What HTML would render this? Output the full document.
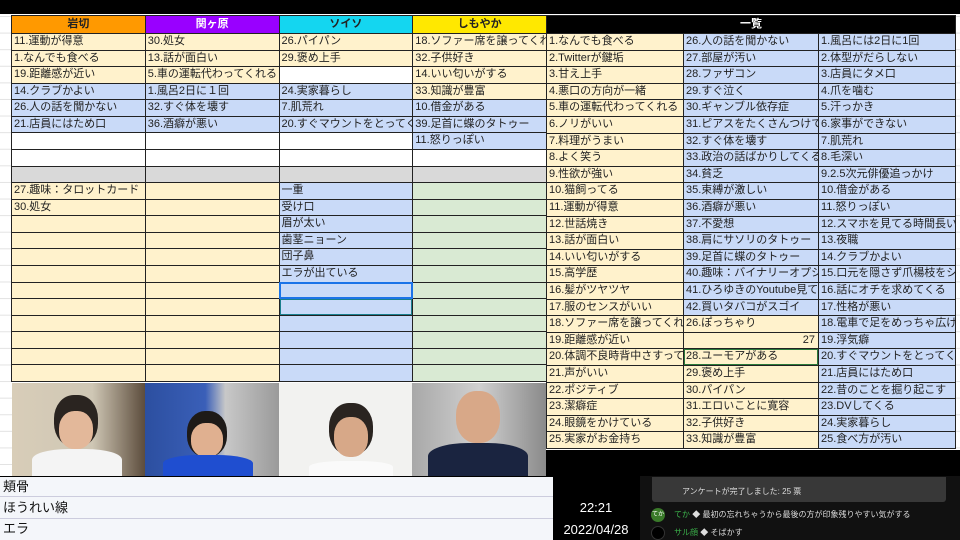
<!DOCTYPE html>
<html><head><meta charset="utf-8">
<style>
*{margin:0;padding:0;box-sizing:border-box}
body{width:960px;height:540px;overflow:hidden;background:#000;position:relative;font-family:"Liberation Sans","Noto Sans CJK JP",sans-serif;}
.sheet{position:absolute;left:0;top:14px;width:960px;height:462px;background:#fff;
background-image:linear-gradient(#e2e2e2 1px,transparent 1px);background-size:100% 16.6px;background-position:0 2px}
.g{position:absolute;display:grid;border:1px solid #222;background:#222;gap:1px}
.g div{font-size:11px;line-height:15.6px;color:#222;padding-left:2px;white-space:nowrap;overflow:hidden;background:#fff}
.h{font-weight:bold;text-align:center;padding:0!important;line-height:17px!important}
.c{background:#fff2cc!important}.b{background:#c9daf8!important}.gr{background:#d9ead3!important}.x{background:#d9d9d9!important}
.vid{position:absolute;top:383px;height:93px;width:134px}
</style></head><body>
<div class="sheet"></div>
<div class="g" style="left:11px;top:15px;width:536px;height:367px;grid-template-columns:repeat(4,1fr);grid-template-rows:17px repeat(21,1fr)">
<div class="h" style="background:#ff9900">岩切</div><div class="h" style="background:#9900ff;color:#fff">関ヶ原</div><div class="h" style="background:#14d6f0">ソイソ</div><div class="h" style="background:#ffe800">しもやか</div>
<div class="c">11.運動が得意</div><div class="c">30.処女</div><div class="c">26.パイパン</div><div class="c">18.ソファー席を譲ってくれる</div>
<div class="c">1.なんでも食べる</div><div class="c">13.話が面白い</div><div class="c">29.褒め上手</div><div class="c">32.子供好き</div>
<div class="c">19.距離感が近い</div><div class="c">5.車の運転代わってくれる</div><div></div><div class="c">14.いい匂いがする</div>
<div class="b">14.クラブかよい</div><div class="b">1.風呂2日に１回</div><div class="b">24.実家暮らし</div><div class="c">33.知識が豊富</div>
<div class="b">26.人の話を聞かない</div><div class="b">32.すぐ体を壊す</div><div class="b">7.肌荒れ</div><div class="b">10.借金がある</div>
<div class="b">21.店員にはため口</div><div class="b">36.酒癖が悪い</div><div class="b">20.すぐマウントをとってくる</div><div class="b">39.足首に蝶のタトゥー</div>
<div></div><div></div><div></div><div class="b">11.怒りっぽい</div>
<div></div><div></div><div></div><div></div>
<div class="x"></div><div class="x"></div><div class="x"></div><div class="x"></div>
<div class="c">27.趣味：タロットカード</div><div class="c"></div><div class="b">一重</div><div class="gr"></div>
<div class="c">30.処女</div><div class="c"></div><div class="b">受け口</div><div class="gr"></div>
<div class="c"></div><div class="c"></div><div class="b">眉が太い</div><div class="gr"></div>
<div class="c"></div><div class="c"></div><div class="b">歯茎ニョーン</div><div class="gr"></div>
<div class="c"></div><div class="c"></div><div class="b">団子鼻</div><div class="gr"></div>
<div class="c"></div><div class="c"></div><div class="b">エラが出ている</div><div class="gr"></div>
<div class="c"></div><div class="c"></div><div class="b" style="outline:2px solid #1a73e8;outline-offset:-1px"></div><div class="gr"></div>
<div class="c"></div><div class="c"></div><div class="b" style="outline:1px solid #1a7f8e;outline-offset:-1px"></div><div class="gr"></div>
<div class="c"></div><div class="c"></div><div class="b"></div><div class="gr"></div>
<div class="c"></div><div class="c"></div><div class="b"></div><div class="gr"></div>
<div class="c"></div><div class="c"></div><div class="b"></div><div class="gr"></div>
<div class="c"></div><div class="c"></div><div class="b"></div><div class="gr"></div>
</div>
<div class="g" style="left:546px;top:15px;width:410px;height:434px;grid-template-columns:136px 134px 1fr;grid-template-rows:17px repeat(25,1fr)">
<div class="h" style="background:#000;color:#fff;grid-column:span 3">一覧</div>
<div class="c">1.なんでも食べる</div><div class="b">26.人の話を聞かない</div><div class="b">1.風呂には2日に1回</div>
<div class="c">2.Twitterが鍵垢</div><div class="b">27.部屋が汚い</div><div class="b">2.体型がだらしない</div>
<div class="c">3.甘え上手</div><div class="b">28.ファザコン</div><div class="b">3.店員にタメ口</div>
<div class="c">4.悪口の方向が一緒</div><div class="b">29.すぐ泣く</div><div class="b">4.爪を噛む</div>
<div class="c">5.車の運転代わってくれる</div><div class="b">30.ギャンブル依存症</div><div class="b">5.汗っかき</div>
<div class="c">6.ノリがいい</div><div class="b">31.ピアスをたくさんつけてる</div><div class="b">6.家事ができない</div>
<div class="c">7.料理がうまい</div><div class="b">32.すぐ体を壊す</div><div class="b">7.肌荒れ</div>
<div class="c">8.よく笑う</div><div class="b">33.政治の話ばかりしてくる</div><div class="b">8.毛深い</div>
<div class="c">9.性欲が強い</div><div class="b">34.貧乏</div><div class="b">9.2.5次元俳優追っかけ</div>
<div class="c">10.猫飼ってる</div><div class="b">35.束縛が激しい</div><div class="b">10.借金がある</div>
<div class="c">11.運動が得意</div><div class="b">36.酒癖が悪い</div><div class="b">11.怒りっぽい</div>
<div class="c">12.世話焼き</div><div class="b">37.不愛想</div><div class="b">12.スマホを見てる時間長い</div>
<div class="c">13.話が面白い</div><div class="b">38.肩にサソリのタトゥー</div><div class="b">13.夜職</div>
<div class="c">14.いい匂いがする</div><div class="b">39.足首に蝶のタトゥー</div><div class="b">14.クラブかよい</div>
<div class="c">15.高学歴</div><div class="b">40.趣味：バイナリーオプション</div><div class="b">15.口元を隠さず爪楊枝をシー</div>
<div class="c">16.髪がツヤツヤ</div><div class="b">41.ひろゆきのYoutube見てる</div><div class="b">16.話にオチを求めてくる</div>
<div class="c">17.服のセンスがいい</div><div class="b">42.買いタバコがスゴイ</div><div class="b">17.性格が悪い</div>
<div class="c">18.ソファー席を譲ってくれる</div><div class="c">26.ぽっちゃり</div><div class="b">18.電車で足をめっちゃ広げる</div>
<div class="c">19.距離感が近い</div><div class="c" style="text-align:right;padding-right:3px">27</div><div class="b">19.浮気癖</div>
<div class="c">20.体調不良時背中さすってくれる</div><div class="c" style="outline:1px solid #2a7a3a;outline-offset:-1px">28.ユーモアがある</div><div class="b">20.すぐマウントをとってくる</div>
<div class="c">21.声がいい</div><div class="c">29.褒め上手</div><div class="b">21.店員にはため口</div>
<div class="c">22.ポジティブ</div><div class="c">30.パイパン</div><div class="b">22.昔のことを掘り起こす</div>
<div class="c">23.潔癖症</div><div class="c">31.エロいことに寛容</div><div class="b">23.DVしてくる</div>
<div class="c">24.眼鏡をかけている</div><div class="c">32.子供好き</div><div class="b">24.実家暮らし</div>
<div class="c">25.実家がお金持ち</div><div class="c">33.知識が豊富</div><div class="b">25.食べ方が汚い</div>
</div>
<div style="position:absolute;left:546px;top:450px;width:414px;height:26px;background:#000"></div>
<div class="vid" style="left:12px;background:linear-gradient(90deg,#d8cdb8,#cfc7b5 60%,#5a4a3a)"><div style="position:absolute;left:42px;top:12px;width:44px;height:52px;border-radius:45%;background:#2a2420"></div><div style="position:absolute;left:47px;top:28px;width:34px;height:38px;border-radius:45%;background:#e3b89a"></div><div style="position:absolute;left:20px;top:66px;width:90px;height:27px;border-radius:40% 40% 0 0;background:#f4f4f4"></div></div>
<div class="vid" style="left:145px;background:linear-gradient(90deg,#2c4fa0,#3a5fb8 45%,#c8c8c8 60%,#9a9a9a)"><div style="position:absolute;left:42px;top:28px;width:40px;height:46px;border-radius:45%;background:#1e1a18"></div><div style="position:absolute;left:46px;top:40px;width:32px;height:34px;border-radius:45%;background:#e0b090"></div><div style="position:absolute;left:18px;top:72px;width:90px;height:21px;border-radius:40% 40% 0 0;background:#1f4ed0"></div></div>
<div class="vid" style="left:279px;background:#f2f2f0"><div style="position:absolute;left:50px;top:20px;width:44px;height:52px;border-radius:45%;background:#2a2420"></div><div style="position:absolute;left:55px;top:34px;width:34px;height:40px;border-radius:45%;background:#d7a888"></div><div style="position:absolute;left:30px;top:78px;width:84px;height:15px;border-radius:40% 40% 0 0;background:#fafafa"></div></div>
<div class="vid" style="left:412px;background:linear-gradient(90deg,#a8a8a8,#d0d0d0 50%,#8a8a8a)"><div style="position:absolute;left:44px;top:8px;width:44px;height:52px;border-radius:45%;background:#d8a888"></div><div style="position:absolute;left:16px;top:60px;width:100px;height:33px;border-radius:40% 40% 0 0;background:#1a2440"></div></div>
<div style="position:absolute;left:0;top:477px;width:553px;height:63px;background:#f4f6fa">
<div style="height:20px;border-bottom:1px solid #ccd;font-size:13px;line-height:20px;padding-left:3px;color:#111">頬骨</div>
<div style="height:22px;border-bottom:1px solid #ccd;font-size:13px;line-height:22px;padding-left:3px;color:#111">ほうれい線</div>
<div style="height:20px;font-size:13px;line-height:20px;padding-left:3px;color:#111">エラ</div></div>
<div style="position:absolute;left:553px;top:500px;width:86px;text-align:center;color:#fff;font-size:13px">22:21</div>
<div style="position:absolute;left:553px;top:522px;width:86px;text-align:center;color:#fff;font-size:13px">2022/04/28</div>
<div style="position:absolute;left:640px;top:476px;width:320px;height:64px;background:#111"></div>
<div style="position:absolute;left:652px;top:477px;width:294px;height:25px;background:#383838;border-radius:0 0 3px 3px;color:#ddd;font-size:8px;line-height:30px;padding-left:30px">アンケートが完了しました: 25 票</div>
<div style="position:absolute;left:651px;top:508px;width:14px;height:14px;border-radius:50%;background:#3a7a2a;color:#fff;font-size:6px;line-height:14px;text-align:center">てか</div>
<div style="position:absolute;left:674px;top:508px;font-size:8px;line-height:14px;color:#ddd"><span style="color:#3bb04a">てか</span> ◆ 最初の忘れちゃうから最後の方が印象残りやすい気がする</div>
<div style="position:absolute;left:651px;top:526px;width:14px;height:14px;border-radius:50%;background:#000;border:1px solid #333"></div>
<div style="position:absolute;left:674px;top:526px;font-size:8px;line-height:14px;color:#ddd"><span style="color:#3bb04a">サル顔</span> ◆ そばかす</div>
</body></html>
